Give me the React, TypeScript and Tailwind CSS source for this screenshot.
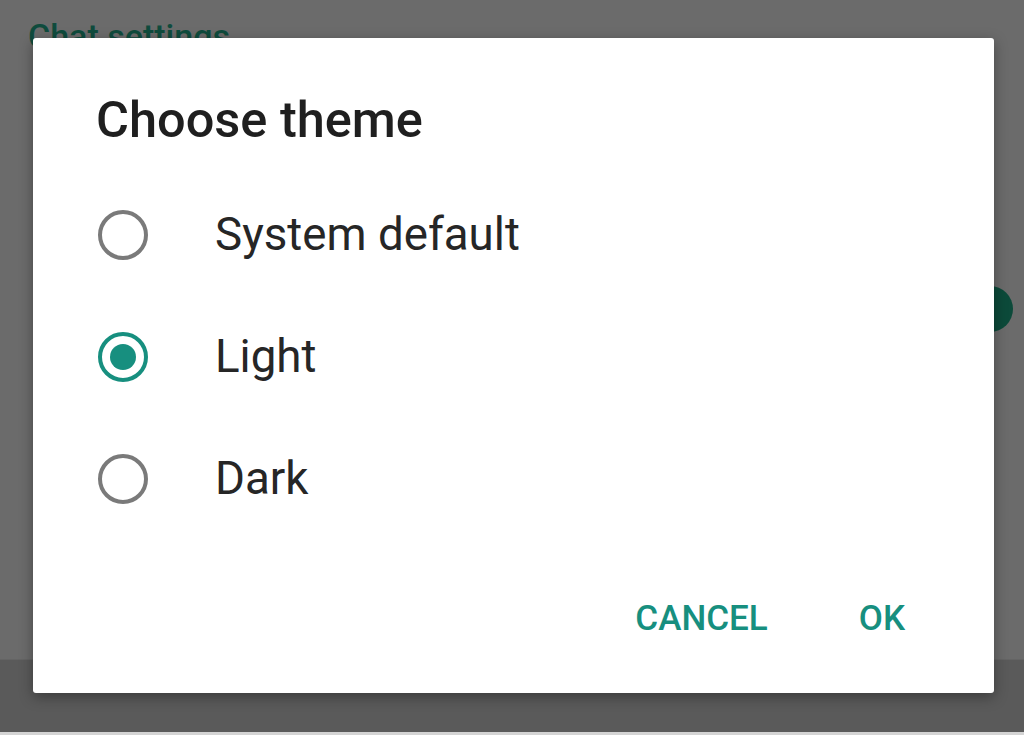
import { useState } from 'react';

const options = ['System default', 'Light', 'Dark'];

function Radio({ checked }: { checked: boolean }) {
  return (
    <div
      className={`w-[50px] h-[50px] rounded-full border-[4px] flex items-center justify-center shrink-0 ${
        checked ? 'border-[#178f7f]' : 'border-[#7a7a7a]'
      }`}
    >
      {checked && <div className="w-[26px] h-[26px] rounded-full bg-[#178f7f]" />}
    </div>
  );
}

export default function App() {
  const [theme, setTheme] = useState('Light');

  return (
    <div
      className="relative w-[1024px] h-[735px] overflow-hidden bg-[#6b6b6b] flex flex-col"
      style={{ fontFamily: 'Roboto, "Noto Sans", sans-serif' }}
    >
      {/* Pantalla de fondo */}
      <div className="pt-[19px] pl-[28px] text-[34px] leading-none font-medium text-[#0f4b3d]">
        Chat settings
      </div>
      <div className="mt-[233px] flex justify-end pr-[11px]">
        <div className="w-[46px] h-[46px] rounded-full bg-[#0c4a3a]" />
      </div>
      <div className="flex-1" />
      <div className="h-[73px] bg-[#5a5a5a] border-t border-[#646464]" />
      <div className="h-[3px] bg-[#d4d4d4]" />

      {/* Diálogo */}
      <div className="absolute left-[33px] top-[38px] w-[961px] h-[655px] bg-white rounded-[3px] shadow-[0_4px_14px_rgba(0,0,0,0.35)] flex flex-col pt-[57px]">
        <h1 className="pl-[63px] text-[50.5px] leading-none font-medium text-[#1f1f1f]">
          Choose theme
        </h1>

        <div className="mt-[28px] flex flex-col">
          {options.map((opt) => (
            <button
              key={opt}
              onClick={() => setTheme(opt)}
              className="h-[122px] flex items-center pl-[65px] text-left"
            >
              <Radio checked={theme === opt} />
              <span className="ml-[67px] text-[45.7px] leading-none text-[#262626]">{opt}</span>
            </button>
          ))}
        </div>

        <div className="mt-[61px] flex justify-end gap-[91px] pr-[89px] text-[35px] leading-none font-medium text-[#178f7f]">
          <button>CANCEL</button>
          <button>OK</button>
        </div>
      </div>
    </div>
  );
}
